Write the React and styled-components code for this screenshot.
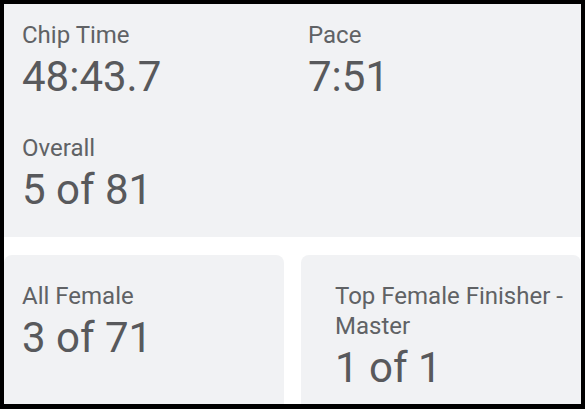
import React from 'react';
import styled, { createGlobalStyle } from 'styled-components';

const GlobalStyle = createGlobalStyle`
    html, body {
        margin: 0;
        padding: 0;
        background: #000;
    }
    body {
        font-family: Roboto, 'Noto Sans', 'Liberation Sans', sans-serif;
    }
`;

const Frame = styled.div`
    width: 585px;
    height: 409px;
    box-sizing: border-box;
    padding: 4px 4px 5px 4px;
    background: #000;
`;

const Screen = styled.div`
    height: 100%;
    background: #fff;
    display: flex;
    flex-direction: column;
    overflow: hidden;
`;

const SummaryCard = styled.section`
    background: #f1f2f4;
    height: 233px;
    box-sizing: border-box;
    padding: 16px 0 0 18px;
    display: grid;
    grid-template-columns: 286px 1fr;
    align-content: start;
    row-gap: 29px;
`;

const Stat = styled.div`
    display: flex;
    flex-direction: column;
`;

const Label = styled.div`
    font-size: 24px;
    line-height: 30px;
    color: #606265;
`;

const Value = styled.div`
    font-size: 42px;
    line-height: 54px;
    color: #58595c;
`;

const CardRow = styled.div`
    flex: 1;
    margin-top: 18px;
    display: grid;
    grid-template-columns: 280px 280px;
    column-gap: 17px;
`;

const Card = styled.section`
    background: #f1f2f4;
    border-radius: 8px 8px 0 0;
    padding: 26px 0 0 ${p => p.$inset}px;
`;

const App = () => {
    return (
        <Frame>
            <GlobalStyle />
            <Screen>
                <SummaryCard>
                    <Stat>
                        <Label>Chip Time</Label>
                        <Value>48:43.7</Value>
                    </Stat>
                    <Stat>
                        <Label>Pace</Label>
                        <Value>7:51</Value>
                    </Stat>
                    <Stat>
                        <Label>Overall</Label>
                        <Value>5 of 81</Value>
                    </Stat>
                </SummaryCard>
                <CardRow>
                    <Card $inset={18}>
                        <Stat>
                            <Label>All Female</Label>
                            <Value>3 of 71</Value>
                        </Stat>
                    </Card>
                    <Card $inset={34}>
                        <Stat>
                            <Label>Top Female Finisher - Master</Label>
                            <Value>1 of 1</Value>
                        </Stat>
                    </Card>
                </CardRow>
            </Screen>
        </Frame>
    );
};

export default App;
